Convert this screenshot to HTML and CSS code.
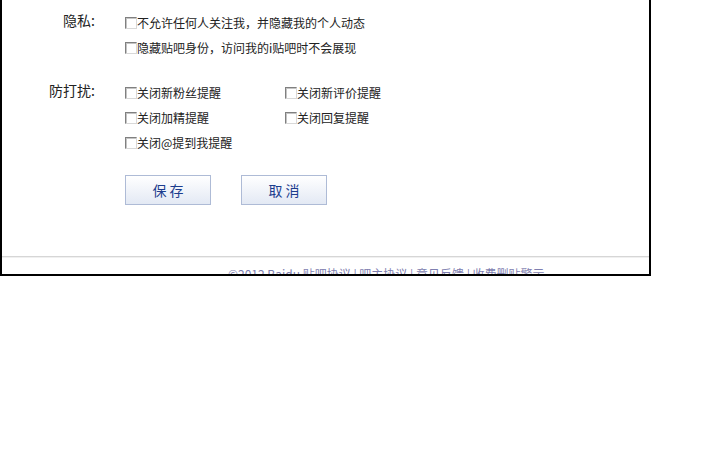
FILE: index.html
```html
<!DOCTYPE html>
<html lang="zh-CN">
<head>
  <meta charset="UTF-8" />
  <title>隐私设置</title>
  <link rel="stylesheet" href="styles.css">
</head>
<body>

  <div class="panel">
    <div class="setting">
      <div class="setting-label">隐私:</div>
      <div class="options one-col">
        <label class="opt"><input type="checkbox" />不允许任何人关注我，并隐藏我的个人动态</label>
        <label class="opt"><input type="checkbox" />隐藏贴吧身份，访问我的i贴吧时不会展现</label>
      </div>
    </div>

    <div class="setting">
      <div class="setting-label">防打扰:</div>
      <div class="options">
        <label class="opt"><input type="checkbox" />关闭新粉丝提醒</label>
        <label class="opt"><input type="checkbox" />关闭新评价提醒</label>
        <label class="opt"><input type="checkbox" />关闭加精提醒</label>
        <label class="opt"><input type="checkbox" />关闭回复提醒</label>
        <label class="opt"><input type="checkbox" />关闭@提到我提醒</label>
      </div>
    </div>

    <div class="actions">
      <button class="btn">保存</button>
      <button class="btn">取消</button>
    </div>

    <div class="footer">
      <span>©2012 Baidu</span> <a href="#">贴吧协议</a> | <a href="#">吧主协议</a> | <a href="#">意见反馈</a> | <a href="#">收费删贴警示</a>
    </div>
  </div>

</body>
</html>
```

FILE: styles.css
```css
body {
  margin: 0;
  background: #fff;
  font-family: "Noto Sans CJK SC", "Liberation Sans", sans-serif;
  color: #333;
}
.panel {
  width: 651px;
  height: 276px;
  padding-top: 10px;
  box-sizing: border-box;
  border: 2px solid #000;
  border-top: none;
  overflow: hidden;
}
.setting {
  display: flex;
  margin-bottom: 20px;
}
.setting-label {
  width: 93px;
  text-align: right;
  font-size: 14px;
  line-height: 20px;
  color: #222;
}
.options {
  margin-left: 30px;
  display: grid;
  grid-template-columns: 160px 160px;
}
.options.one-col {
  grid-template-columns: 1fr;
}
.opt {
  display: flex;
  align-items: center;
  height: 25px;
  font-size: 12px;
  color: #222;
  white-space: nowrap;
}
.opt input {
  appearance: none;
  -webkit-appearance: none;
  width: 12px;
  height: 12px;
  margin: 1px 0 0 0;
  border: 1px solid;
  border-color: #808080 #d8d8d8 #d8d8d8 #808080;
  box-shadow: inset 1px 1px 0 #c4c4c4;
  background: #fff;
  box-sizing: border-box;
}
.actions {
  display: flex;
  gap: 30px;
  margin-left: 123px;
}
.btn {
  width: 86px;
  height: 30px;
  border: 1px solid #aebbd6;
  background: linear-gradient(#ffffff, #e3e9f4);
  color: #1c3d8e;
  font-family: inherit;
  font-size: 14px;
  letter-spacing: 3px;
  padding: 0 0 0 3px;
}
.footer {
  margin-top: 51px;
  border-top: 1px solid #d6d6d6;
  box-shadow: inset 0 1px 0 #f0f0f0;
  padding: 7px 0 0 226px;
  font-size: 12px;
  line-height: 20px;
  color: #7f7fb0;
}
.footer a {
  color: #7f7fb0;
  text-decoration: none;
}
```
